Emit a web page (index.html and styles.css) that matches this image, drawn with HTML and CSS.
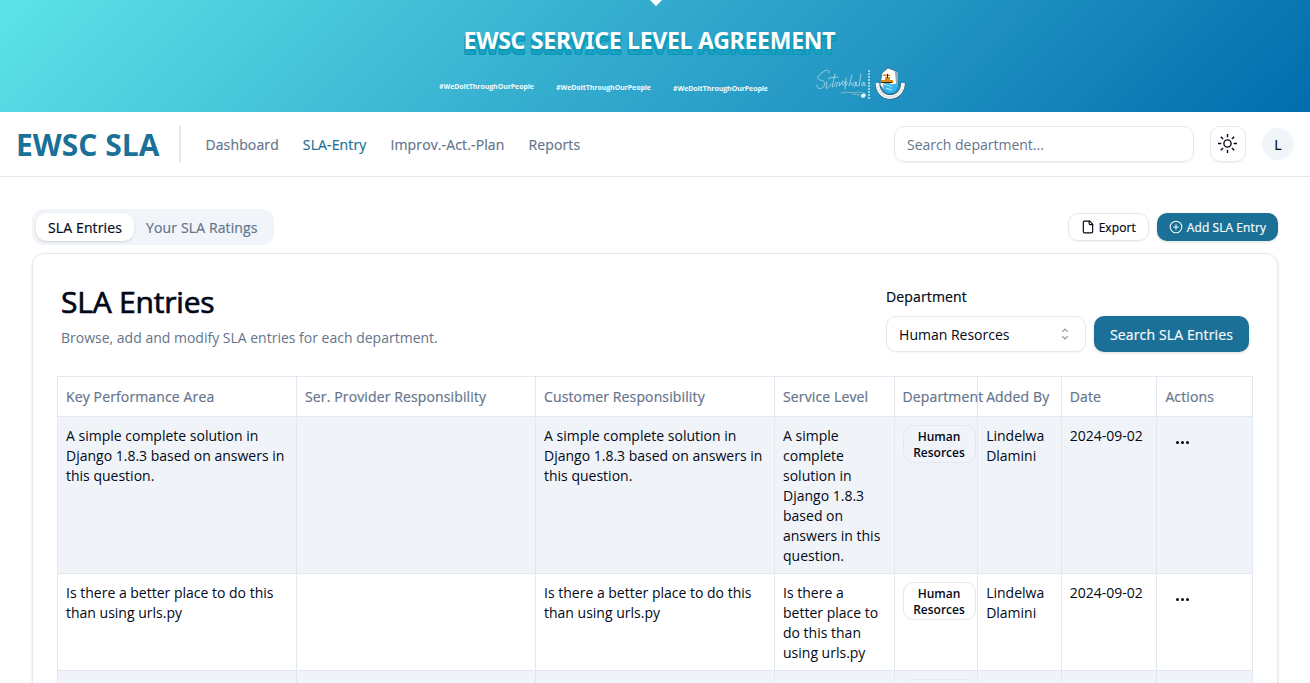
FILE: index.html
```html
<!DOCTYPE html>
<html lang="en">
<head>
<meta charset="utf-8">
<title>EWSC SLA</title>
<link rel="stylesheet" href="styles.css">
</head>
<body>
<div class="banner">
  <svg class="banner-notch" width="14" height="7" viewBox="0 0 14 7"><path d="M0 -1 7 6.200 14 -1z" fill="#fff"/></svg>
  <svg class="banner-art" width="1310" height="112" viewBox="0 0 1310 112">
    <text class="banner-title" x="463.500" y="49" textLength="372">EWSC SERVICE LEVEL AGREEMENT</text>
    <g class="hashtag">
      <text x="439" y="89" textLength="95">#WeDoItThroughOurPeople</text>
      <text x="556" y="90" textLength="95">#WeDoItThroughOurPeople</text>
      <text x="673" y="91" textLength="95">#WeDoItThroughOurPeople</text>
    </g>
    <!-- script signature -->
    <g fill="none" stroke="#b4d9e6" stroke-width=".8" stroke-linecap="round" stroke-linejoin="round">
      <path d="M829 73c1-3-2-4-6-1-5 3-7 7-3 8 5 1 6 3 4 6-2 4-8 3-7-1M827 82l-1 6c2 1 4-2 5-4M829 78.500v.5M835 74l-3 13c2 0 3-3 4-5M829 78l9-1M836 87l2-5 2 1-1 3c2-1 3-3 4-5-2 1-2 4 0 4s2-4 0-4M846 78l-1 11M845 82c3-2 3 4 0 4M852 75l-3 11c1-4 3-4 3-1M855 82c-3 0-3 5 0 4l1-4v4M861 74l-2 12M857 82c-2 2-1 5 2 3M863 82c-2 1-2 4 0 4l1-4 1 4 1-1"/>
      <path d="M841 93c6-2 12 1 18-1l4 1M852 94l8 1" stroke="#8fbdcb"/>
    </g>
    <path d="M861 95l3-2 2 2-2 3-3-1z" fill="#eaf7fc"/>
    <path d="M869 70v30" stroke="#bfe6f4" stroke-width="1.500" stroke-dasharray="2 1"/>
    <!-- water company crest -->
    <path d="M882 73l6-5 5 2 4 2 1 14-4 5h-9l-5-6z" fill="#fff" stroke="#34505b" stroke-width=".6"/>
    <path d="M895 72h3v12h-2z" fill="#9ba7ad"/>
    <path d="M883 84c3-2 6-1 8 0 3 1 5-1 7-1 0 6-3 10-8 10-4 0-7-3-7-9z" fill="#38b6ec"/>
    <path d="M884 85c3-1 5 1 8 2M886 88l6 2" stroke="#b9ecff" stroke-width="1" fill="none"/>
    <path d="M881 80h12v3h-2l-1-1h-9zM885 77h5v3h-5zM883 74.500h7v1.500h-7z" fill="#d98c12"/>
    <path d="M887.500 74v4M881 82.500h11" stroke="#35240e" stroke-width="1"/>
    <path d="M877.500 83c0 8 5 14 12.500 14s13-6 13-14" fill="none" stroke="#34505b" stroke-width="4.800"/>
    <path d="M877.500 83c0 8 5 14 12.500 14s13-6 13-14" fill="none" stroke="#f4f7f8" stroke-width="3.800"/>
    <path d="M878 87c2 6 6 10 12 10s10-4 12-9" fill="none" stroke="#a5b1b6" stroke-width=".8" stroke-dasharray="1 .8"/>
  </svg>
</div>

<header class="topbar">
  <div class="brand">EWSC SLA</div>
  <div class="brand-rule"></div>
  <nav class="nav medium">
    <a>Dashboard</a><a class="active">SLA-Entry</a><a>Improv.-Act.-Plan</a><a>Reports</a>
  </nav>
  <div class="tools">
    <div class="search">Search department...</div>
    <div class="theme">
      <svg width="19" height="19" viewBox="0 0 19 19" fill="none" stroke="currentColor" stroke-width="1.400"><circle cx="9.500" cy="9.500" r="3.600"/><path d="M9.500 0v3.300M9.500 15.700V19M0 9.500h3.300M15.700 9.500H19M2.800 2.800l2.300 2.300M13.900 13.900l2.300 2.300M2.800 16.200l2.300-2.300M13.900 5.100l2.300-2.300"/></svg>
    </div>
    <div class="avatar medium">L</div>
  </div>
</header>

<main class="page">
  <div class="page-bar">
    <div class="tabs medium"><div class="tab selected">SLA Entries</div><div class="tab">Your SLA Ratings</div></div>
    <div class="actions">
      <div class="btn-sm medium outline">
        <svg width="14" height="14" viewBox="0 0 24 24" fill="none" stroke="currentColor" stroke-width="2" stroke-linecap="round" stroke-linejoin="round"><path d="M15 2H6a2 2 0 0 0-2 2v16a2 2 0 0 0 2 2h12a2 2 0 0 0 2-2V7Z"/><path d="M14 2v4a2 2 0 0 0 2 2h4"/></svg>
        <span>Export</span>
      </div>
      <div class="btn-sm medium primary">
        <svg width="14" height="14" viewBox="0 0 24 24" fill="none" stroke="currentColor" stroke-width="1.800" stroke-linecap="round"><circle cx="12" cy="12" r="10"/><path d="M8 12h8M12 8v8"/></svg>
        <span>Add SLA Entry</span>
      </div>
    </div>
  </div>

  <section class="card">
    <div class="card-head">
      <div>
        <h1>SLA Entries</h1>
        <p>Browse, add and modify SLA entries for each department.</p>
      </div>
      <div class="filter">
        <label class="medium">Department</label>
        <div class="filter-row">
          <div class="select"><span>Human Resorces</span>
            <svg width="16" height="16" viewBox="0 0 15 15" fill="currentColor"><path fill-rule="evenodd" clip-rule="evenodd" d="M4.932 5.432a.45.45 0 0 0 .636 0L7.500 3.500l1.932 1.932a.45.45 0 0 0 .636-.636l-2.250-2.250a.45.45 0 0 0-.636 0l-2.250 2.250a.45.45 0 0 0 0 .636zM4.932 9.568a.45.45 0 0 1 .636 0L7.500 11.500l1.932-1.932a.45.45 0 0 1 .636.636l-2.250 2.250a.45.45 0 0 1-.636 0l-2.250-2.250a.45.45 0 0 1 0-.636z"/></svg>
          </div>
          <div class="btn medium primary">Search SLA Entries</div>
        </div>
      </div>
    </div>
    <table class="entries">
      <colgroup><col class="wide"><col class="wide"><col class="wide"><col class="level"><col class="dept"><col class="user"><col class="date"><col class="menu"></colgroup>
      <thead class="medium">
        <tr><th>Key Performance Area</th><th>Ser. Provider Responsibility</th><th>Customer Responsibility</th><th>Service Level</th><th>Department</th><th>Added By</th><th>Date</th><th>Actions</th></tr>
      </thead>
      <tbody>
        <tr class="shaded">
          <td>A simple complete solution in Django 1.8.3 based on answers in this question.</td><td></td>
          <td>A simple complete solution in Django 1.8.3 based on answers in this question.</td>
          <td>A simple complete solution in Django 1.8.3 based on answers in this question.</td>
          <td><div class="badge">Human Resorces</div></td><td>Lindelwa Dlamini</td><td>2024-09-02</td>
          <td><div class="dots"><i></i><i></i><i></i></div></td>
        </tr>
        <tr>
          <td>Is there a better place to do this than using urls.py</td><td></td>
          <td>Is there a better place to do this than using urls.py</td>
          <td>Is there a better place to do this than using urls.py</td>
          <td><div class="badge">Human Resorces</div></td><td>Lindelwa Dlamini</td><td>2024-09-02</td>
          <td><div class="dots"><i></i><i></i><i></i></div></td>
        </tr>
        <tr class="shaded">
          <td></td><td></td><td></td><td></td>
          <td><div class="badge empty"></div></td><td></td><td></td><td></td>
        </tr>
      </tbody>
    </table>
  </section>
</main>
</body>
</html>
```

FILE: styles.css
```css
* { box-sizing: border-box; }

html, body { height: 100%; }

body {
  display: flex;
  flex-direction: column;
  margin: 0;
  overflow: hidden;
  background: #fff;
  color: #020817;
  font-family: "Open Sans", "Noto Sans", sans-serif;
  font-size: 14px;
  line-height: 20px;
}

svg { display: block; flex: none; }

/* Medium weight, drawn from the regular face */
.medium {
  letter-spacing: .13px;
  -webkit-text-stroke: .2px currentColor;
}

.banner {
  position: relative;
  flex: none;
  height: 112px;
  background: linear-gradient(135deg, #5de3e7 0%, #32a9cd 48%, #2497c4 65%, #006dad 100%);
}

.banner-notch { position: absolute; left: 649px; top: 0; }

.banner-title {
  fill: #fff;
  font-family: "Noto Sans", sans-serif;
  font-size: 23px;
  font-weight: 700;
  text-shadow: 0 5px 0 #1c9fc2, 1px 6px 0 #0598b6, -1px 6px 0 #0598b6, 1px 4px 0 #0598b6, -1px 4px 0 #0598b6, 0 3px 0 #0598b6;
}

.hashtag { fill: #f2fbff; font-size: 7px; font-weight: 700; }

.topbar {
  display: flex;
  flex: none;
  align-items: center;
  height: 65px;
  padding: 0 16px;
  border-bottom: 1px solid #e2e8f0;
}

.brand {
  padding-top: 2px;
  color: #1a7096;
  font-size: 30px;
  font-weight: 700;
  line-height: 36px;
  white-space: nowrap;
}

.brand-rule { width: 2px; height: 36px; margin-left: 20px; background: #e2e8f0; }

.nav { display: flex; gap: 24px; margin-left: 24px; padding-top: 2px; color: #64748b; }
.nav .active { color: #1a7096; }

.tools { display: flex; align-items: center; gap: 16px; margin-left: auto; }

.search, .theme, .select, .outline {
  border: 1px solid #e2e8f0;
  box-shadow: 0 1px 2px rgba(0, 0, 0, .05);
}

.search {
  width: 300px;
  height: 36px;
  padding: 8px 12px;
  border-radius: 10px;
  color: #64748b;
}

.theme {
  display: grid;
  place-items: center;
  width: 36px;
  height: 36px;
  padding: 0 1px 1px 0;
  border-radius: 10px;
}

.avatar {
  display: grid;
  place-items: center;
  width: 32px;
  height: 32px;
  padding-top: 2px;
  border-radius: 50%;
  background: #f1f5f9;
}

.page { flex: 1; min-height: 0; padding: 32px 32px 0; overflow: hidden; }

.page-bar { display: flex; align-items: center; justify-content: space-between; height: 36px; }

.tabs {
  display: flex;
  height: 36px;
  padding: 4px;
  border-radius: 12px;
  background: #f1f5f9;
  color: #64748b;
}

.tab { padding: 5px 12px 3px; border-radius: 10px; }
.tab.selected { background: #fff; color: #020817; box-shadow: 0 1px 3px rgba(0, 0, 0, .1), 0 1px 2px -1px rgba(0, 0, 0, .1); }

.actions { display: flex; gap: 8px; }

.btn-sm {
  display: flex;
  align-items: center;
  gap: 4px;
  height: 28px;
  padding: 0 12px;
  border-radius: 10px;
  font-size: 12px;
  letter-spacing: .08px;
}

.btn-sm span { padding-top: 2px; }

.primary { background: #1a7096; color: #f8fafc; box-shadow: 0 1px 3px rgba(0, 0, 0, .15); }

.card {
  height: 900px;
  margin-top: 8px;
  padding: 24px;
  border: 1px solid #e2e8f0;
  border-radius: 12px;
  box-shadow: 0 1px 3px rgba(0, 0, 0, .1), 0 1px 2px -1px rgba(0, 0, 0, .1);
}

.card-head { display: flex; justify-content: space-between; height: 98px; padding: 0 4px; }

h1 {
  margin: 6px 0 8px;
  font-size: 30px;
  font-weight: 400;
  line-height: 36px;
  letter-spacing: -.2px;
  -webkit-text-stroke: .7px currentColor;
}

.card-head p { margin: 0; color: #64748b; }

.filter { padding-top: 9px; }
.filter label { display: block; height: 29px; }
.filter-row { display: flex; gap: 8px; }

.select {
  display: flex;
  align-items: center;
  justify-content: space-between;
  width: 200px;
  height: 36px;
  padding: 0 12px;
  border-radius: 10px;
}

.select span { padding-top: 2px; }
.select svg { opacity: .5; }

.btn {
  height: 36px;
  padding: 9px 16px 7px;
  border-radius: 10px;
  white-space: nowrap;
}

.entries {
  width: 1196px;
  table-layout: fixed;
  border-collapse: collapse;
}

.wide { width: 20%; }
.level { width: 10%; }
.dept, .user { width: 7%; }
.date, .menu { width: 8%; }

th, td {
  padding: 9px 8px 7px;
  border: 1px solid #e2e8f0;
  text-align: left;
  vertical-align: top;
}

th { height: 40px; padding: 0 8px; color: #64748b; font-weight: 400; vertical-align: middle; white-space: nowrap; }

.shaded { background: #f0f4f9; }

.badge {
  width: 73px;
  margin-top: -1px;
  padding: 3px 8px 1px;
  border: 1px solid #e2e8f0;
  border-radius: 10px;
  font-size: 12px;
  font-weight: 600;
  line-height: 16px;
  text-align: center;
}

.badge.empty { height: 38px; }

.dots { display: flex; gap: 2px; padding: 15px 0 0 11px; }
.dots i { width: 3px; height: 3px; border-radius: 50%; background: #020817; }
```
